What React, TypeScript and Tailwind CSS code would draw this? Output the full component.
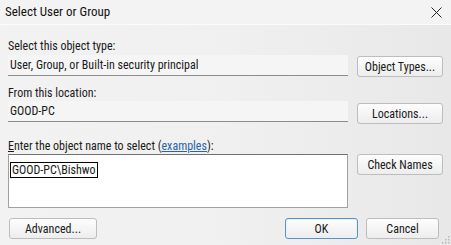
import React from 'react';

const font = { fontFamily: '"Roboto Condensed", "Liberation Sans", sans-serif' };

function Btn({ label, primary, className = '' }: { label: string; primary?: boolean; className?: string }) {
  return (
    <button
      className={`h-[21px] rounded-[3px] border bg-gradient-to-b from-[#fdfdfd] to-[#ededed] text-[12px] leading-none text-[#1a1a1a] ${
        primary ? 'border-[#5b93c4] shadow-[inset_0_0_0_1px_#e3f1fb]' : 'border-[#bdbdbd]'
      } ${className}`}
    >
      {label}
    </button>
  );
}

function ReadField({ text }: { text: string }) {
  return (
    <div className="flex h-[21px] items-center border-b border-[#8c8c8c] bg-[#f5f5f5] pl-[2px] text-[12px] text-[#1a1a1a]">
      {text}
    </div>
  );
}

export default function App() {
  return (
    <div
      className="relative flex h-[245px] w-[451px] flex-col overflow-hidden bg-gradient-to-r from-[#f2f2f2] via-[#f0f0f0] to-[#e8e8e8] text-[#1a1a1a]"
      style={font}
    >
      {/* Title bar */}
      <div className="flex h-[25px] items-center justify-between border-b border-[#fbfbfb] bg-[#f3f3f3] pl-[5px] pr-[8px]">
        <span className="text-[13px] text-[#111]">Select User or Group</span>
        <svg width="11" height="11" viewBox="0 0 11 11" className="mr-[1px]">
          <path d="M0.5 0.5 L10.5 10.5 M10.5 0.5 L0.5 10.5" stroke="#222" strokeWidth="1" />
        </svg>
      </div>

      <div className="flex flex-1 flex-col px-[8px] pt-[13px]">
        {/* Row 1 */}
        <div className="text-[12px] leading-[16px]">Select this object type:</div>
        <div className="mt-[1px] flex items-start gap-[9px]">
          <div className="flex-1">
            <ReadField text="User, Group, or Built-in security principal" />
          </div>
          <Btn label="Object Types..." className="mt-[1px] w-[86px]" />
        </div>

        {/* Row 2 */}
        <div className="mt-[8px] text-[12px] leading-[16px]">From this location:</div>
        <div className="flex items-start gap-[9px]">
          <div className="flex-1">
            <ReadField text="GOOD-PC" />
          </div>
          <Btn label="Locations..." className="mt-[2px] w-[86px]" />
        </div>

        {/* Row 3 */}
        <div className="mt-[14px] text-[12px] leading-[16px]">
          <span className="underline">E</span>nter the object name to select (<span className="text-[#2a64a8] underline">examples</span>):
        </div>
        <div className="flex items-start gap-[9px]">
          <div className="h-[54px] flex-1 border border-[#a0a0a0] border-t-[#707070] bg-white pl-[1px] pt-[2px]">
            <span className="border border-black px-[1px] text-[12px] leading-[14px]">GOOD-PC\Bishwo</span>
          </div>
          <Btn label="Check Names" className="w-[86px]" />
        </div>

        {/* Bottom buttons */}
        <div className="mt-[10px] flex items-center">
          <Btn label="Advanced..." className="ml-[1px] w-[88px]" />
          <div className="flex-1" />
          <Btn label="OK" primary className="w-[73px]" />
          <Btn label="Cancel" className="ml-[8px] w-[73px]" />
          <div className="w-[4px]" />
        </div>
      </div>

      {/* Resize grip */}
      <svg width="8" height="8" viewBox="0 0 8 8" className="absolute bottom-[1px] right-[1px]">
        {[
          [6, 0],
          [6, 3],
          [3, 3],
          [6, 6],
          [3, 6],
          [0, 6],
        ].map(([x, y], i) => (
          <rect key={i} x={x} y={y} width="1.5" height="1.5" fill="#b8b8b8" />
        ))}
      </svg>
    </div>
  );
}
